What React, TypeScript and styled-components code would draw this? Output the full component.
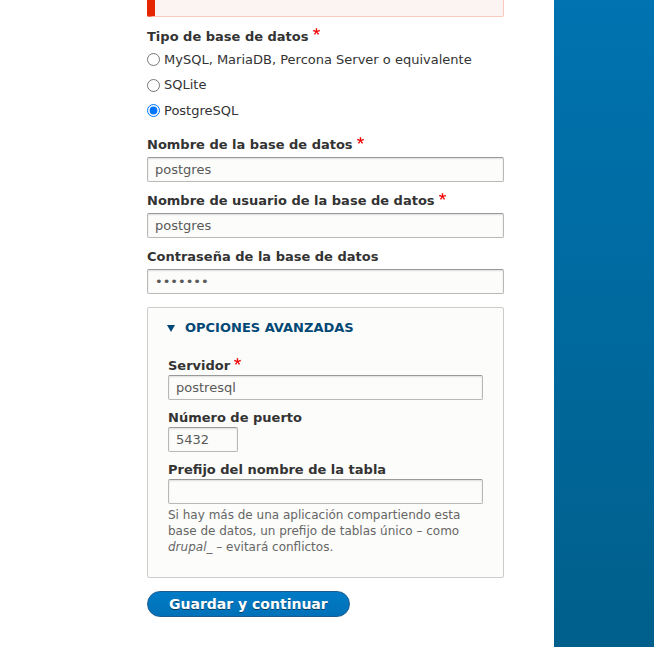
import React from "react";
import styled, { createGlobalStyle } from "styled-components";

const Global = createGlobalStyle`
  html, body { margin: 0; padding: 0; background: #fff; }
  body {
    font-family: "DejaVu Sans", "Liberation Sans", sans-serif;
    font-size: 13px;
    line-height: 20px;
    color: #333;
  }
  * { box-sizing: border-box; }
`;

const Page = styled.div`
  display: flex;
  min-height: 100vh;
  overflow: hidden;
`;

const Main = styled.main`
  flex: 0 0 554px;
  padding-left: 147px;
`;

const Sidebar = styled.aside`
  flex: 1;
  background: linear-gradient(to bottom, #0073b0, #005f8b);
`;

const Form = styled.form`
  width: 357px;
  display: flex;
  flex-direction: column;
`;

const Message = styled.div`
  margin-top: -40px;
  height: 57px;
  background: #fcf4f2;
  border: 1px solid #f9c9bf;
  border-left: 8px solid #e62600;
  border-radius: 2px;
`;

const Fieldset = styled.fieldset`
  border: 0;
  margin: 9.5px 0 0;
  padding: 0;
  min-width: 0;
`;

const Legend = styled.legend`
  padding: 0;
  font-weight: bold;
  line-height: 20px;
  margin-bottom: 3px;
  float: left;
  width: 100%;
`;

const RadioList = styled.div`
  clear: both;
  display: flex;
  flex-direction: column;
  padding-bottom: 9px;
`;

const RadioRow = styled.label`
  display: flex;
  align-items: center;
  gap: 4px;
  height: 20px;
  margin-bottom: 5.5px;
`;

const Radio = styled.input`
  margin: 0;
  width: 13px;
  height: 13px;
`;

const Item = styled.div<{ $compact?: boolean }>`
  display: flex;
  flex-direction: column;
  margin-bottom: 9px;
`;

const Label = styled.label<{ $compact?: boolean }>`
  font-weight: bold;
  line-height: ${(p) => (p.$compact ? "18px" : "20px")};
  margin-bottom: ${(p) => (p.$compact ? "0" : "2px")};
`;

const Star = styled.svg`
  display: inline-block;
  width: 7px;
  height: 7px;
  margin: 0 4px;
  vertical-align: super;
`;

const TextInput = styled.input<{ $w?: number }>`
  width: ${(p) => (p.$w ? `${p.$w}px` : "100%")};
  height: 25px;
  margin: 0;
  padding: 0 7px;
  border: 1px solid #b8b8b8;
  border-top-color: #999;
  border-radius: 2px;
  background: #fcfcfa;
  box-shadow: inset 0 1px 2px rgba(0, 0, 0, 0.125);
  font-family: "DejaVu Sans", "Liberation Sans", sans-serif;
  font-size: 13px;
  color: #595959;
  outline: none;
`;

const Details = styled.details`
  margin-top: 4px;
  border: 1px solid #ccc;
  border-radius: 2px;
  background: #fcfcfa;
`;

const Summary = styled.summary`
  list-style: none;
  display: flex;
  align-items: center;
  gap: 10px;
  padding: 10px 19px 0;
  line-height: 20px;
  font-weight: bold;
  text-transform: uppercase;
  color: #004875;
  cursor: pointer;
  &::-webkit-details-marker { display: none; }
`;

const Caret = styled.svg`
  width: 8px;
  height: 7px;
  flex: none;
`;

const DetailsBody = styled.div`
  padding: 19px 20px 22px;
  display: flex;
  flex-direction: column;
`;

const LastItem = styled(Item)`
  margin-bottom: 0;
`;

const Description = styled.div`
  margin-top: 3px;
  font-size: 12px;
  line-height: 16px;
  color: #666;
`;

const Button = styled.button`
  align-self: flex-start;
  margin-top: 13px;
  height: 26px;
  padding: 0 21px;
  border: 1px solid #1e5c90;
  border-radius: 20em;
  background: linear-gradient(to bottom, #007bc6, #0071b8);
  color: #fff;
  font-family: "DejaVu Sans", "Liberation Sans", sans-serif;
  font-size: 14px;
  font-weight: bold;
  line-height: 16px;
  text-shadow: 0 1px rgba(0, 0, 0, 0.5);
  cursor: pointer;
`;

const Required = () => (
  <Star viewBox="0 0 16 16" aria-hidden="true">
    <path
      fill="#ee0000"
      d="M0,7.562l1.114-3.438c2.565,0.906,4.43,1.688,5.59,2.35C6.398,3.553,6.237,1.544,6.22,0.447h3.511c-0.05,1.597-0.234,3.6-0.558,6.003c1.664-0.838,3.566-1.613,5.714-2.325L16,7.562c-2.05,0.678-4.06,1.131-6.028,1.356c0.984,0.856,2.372,2.381,4.166,4.575l-2.906,2.059c-0.935-1.274-2.041-3.009-3.316-5.206c-1.194,2.275-2.244,4.013-3.147,5.206l-2.856-2.059c1.872-2.307,3.211-3.832,4.017-4.575C3.849,8.516,1.872,8.062,0,7.562"
    />
  </Star>
);

export default function App() {
  return (
    <>
      <Global />
      <Page>
        <Main>
          <Form onSubmit={(e) => e.preventDefault()}>
            <Message />
            <Fieldset>
              <Legend>
                Tipo de base de datos
                <Required />
              </Legend>
              <RadioList>
                <RadioRow>
                  <Radio type="radio" name="driver" />
                  MySQL, MariaDB, Percona Server o equivalente
                </RadioRow>
                <RadioRow>
                  <Radio type="radio" name="driver" />
                  SQLite
                </RadioRow>
                <RadioRow>
                  <Radio type="radio" name="driver" defaultChecked />
                  PostgreSQL
                </RadioRow>
              </RadioList>
            </Fieldset>

            <Item>
              <Label>
                Nombre de la base de datos
                <Required />
              </Label>
              <TextInput type="text" defaultValue="postgres" />
            </Item>
            <Item>
              <Label>
                Nombre de usuario de la base de datos
                <Required />
              </Label>
              <TextInput type="text" defaultValue="postgres" />
            </Item>
            <Item>
              <Label>Contraseña de la base de datos</Label>
              <TextInput type="password" defaultValue="1234567" />
            </Item>

            <Details open>
              <Summary>
                <Caret viewBox="0 0 8 7" aria-hidden="true">
                  <polygon points="0,0 8,0 4,7" fill="#004875" />
                </Caret>
                Opciones avanzadas
              </Summary>
              <DetailsBody>
                <Item>
                  <Label $compact>
                    Servidor
                    <Required />
                  </Label>
                  <TextInput type="text" defaultValue="postresql" />
                </Item>
                <Item>
                  <Label $compact>Número de puerto</Label>
                  <TextInput type="text" defaultValue="5432" $w={70} />
                </Item>
                <LastItem>
                  <Label $compact>Prefijo del nombre de la tabla</Label>
                  <TextInput type="text" defaultValue="" />
                  <Description>
                    Si hay más de una aplicación compartiendo esta base de datos, un prefijo de
                    tablas único – como <em>drupal_</em> – evitará conflictos.
                  </Description>
                </LastItem>
              </DetailsBody>
            </Details>

            <Button type="submit">Guardar y continuar</Button>
          </Form>
        </Main>
        <Sidebar />
      </Page>
    </>
  );
}
